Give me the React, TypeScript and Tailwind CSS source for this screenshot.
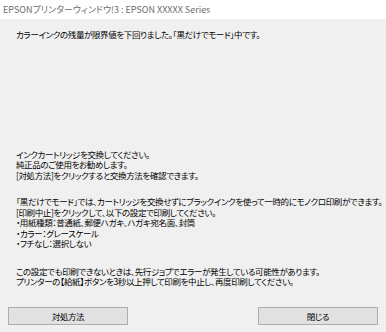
import React from "react";

const jp = {
  fontFamily: '"Noto Sans CJK JP", "Noto Sans", sans-serif',
  fontFeatureSettings: '"palt"',
} as React.CSSProperties;

const App = () => {
  return (
    <div className="w-[386px] h-[332px] flex flex-col bg-[#f0f0f0] text-black overflow-hidden" style={jp}>
      {/* TITLE */}
      <div className="h-[19px] bg-white flex items-center pl-[3px] text-[9px] text-[#6d6d6d]">
        EPSONプリンターウィンドウ!3 : EPSON XXXXX Series
      </div>

      {/* BODY */}
      <div className="flex-1 flex flex-col pl-[16px] text-[8.5px] leading-[10.5px] tracking-[-0.38px]">
        <p className="mt-[10px]">カラーインクの残量が限界値を下回りました。「黒だけでモード」中です。</p>

        <div className="mt-[109px]">
          <p>インクカートリッジを交換してください。</p>
          <p>純正品のご使用をお勧めします。</p>
          <p>[対処方法]をクリックすると交換方法を確認できます。</p>
        </div>

        <div className="mt-[16px]">
          <p className="whitespace-nowrap">「黒だけでモード」では、カートリッジを交換せずにブラックインクを使って一時的にモノクロ印刷ができます。</p>
          <p>[印刷中止]をクリックして、以下の設定で印刷してください。</p>
          <p>・用紙種類：普通紙、郵便ハガキ、ハガキ宛名面、封筒</p>
          <p>・カラー：グレースケール</p>
          <p>・フチなし：選択しない</p>
        </div>

        <div className="mt-[17px]">
          <p>この設定でも印刷できないときは、先行ジョブでエラーが発生している可能性があります。</p>
          <p>プリンターの【給紙】ボタンを3秒以上押して印刷を中止し、再度印刷してください。</p>
        </div>
      </div>

      {/* BUTTONS */}
      <div className="flex justify-between px-[8px] pb-[7px]">
        <button className="w-[120px] h-[18px] bg-[#e1e1e1] border border-[#adadad] text-[8.5px] tracking-[-0.4px]">対処方法</button>
        <button className="w-[120px] h-[18px] bg-[#e1e1e1] border border-[#adadad] text-[8.5px] tracking-[-0.4px]">閉じる</button>
      </div>
    </div>
  );
};

export default App;
